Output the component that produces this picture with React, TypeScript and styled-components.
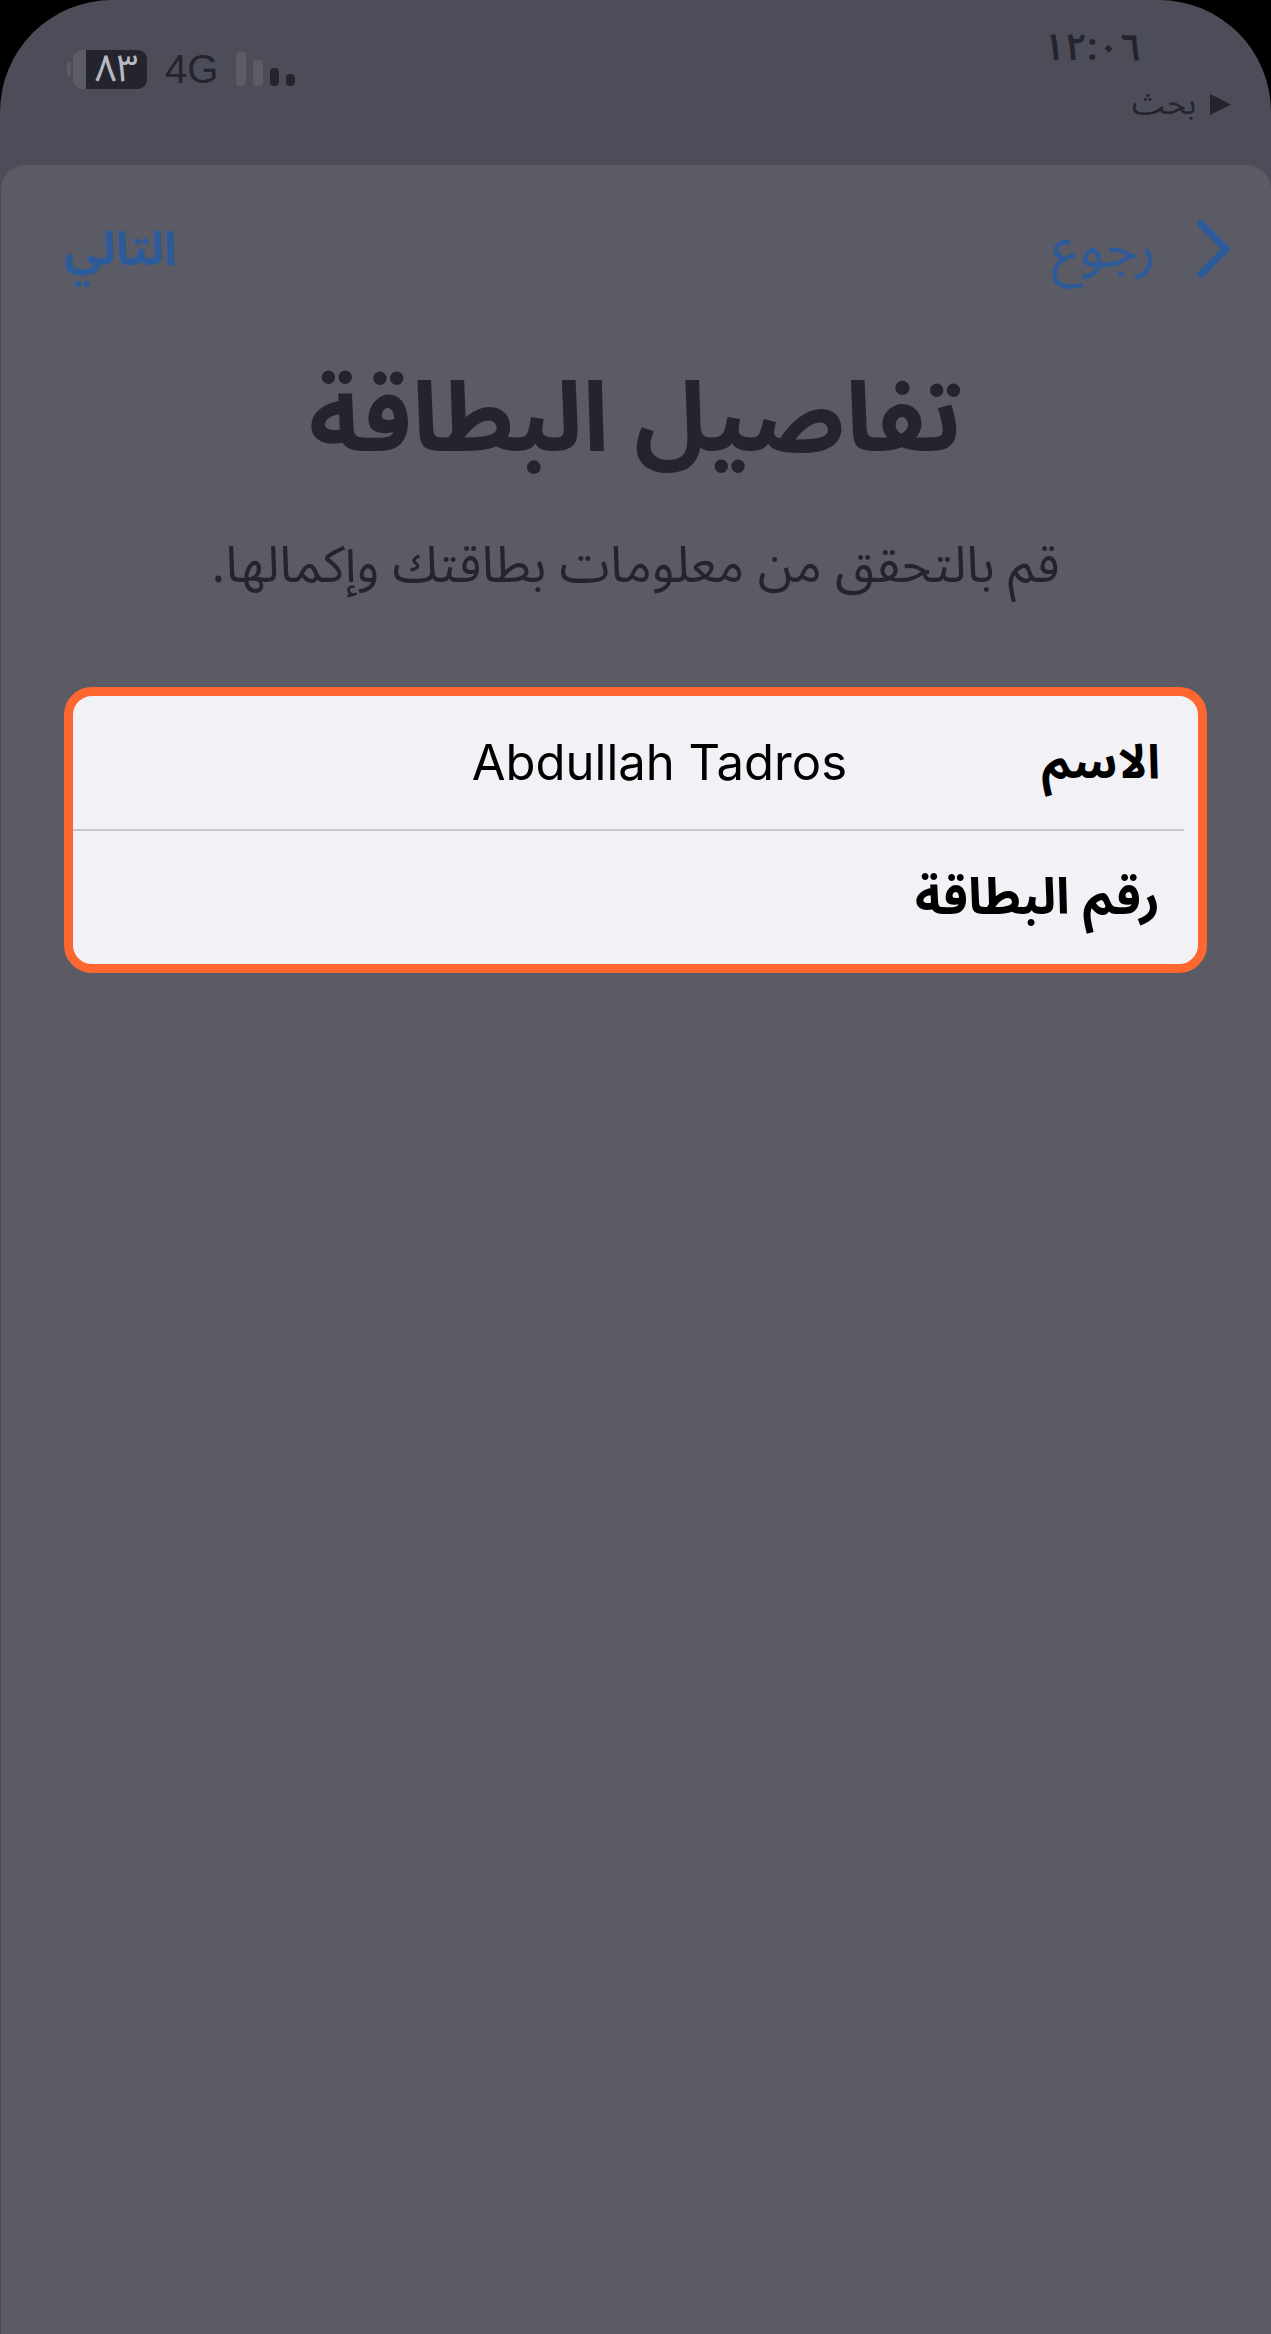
import React from "react";
import styled, { createGlobalStyle } from "styled-components";

const Global = createGlobalStyle`
  html, body { margin: 0; padding: 0; background: #000; }
  * { box-sizing: border-box; }
`;

const ARABIC = `"Noto Sans Arabic", "Noto Sans", "DejaVu Sans", sans-serif`;

const Screen = styled.div`
  width: 1271px;
  height: 2334px;
  display: flex;
  flex-direction: column;
  overflow: hidden;
  background: #4d4d59;
  border-radius: 112px 112px 0 0;
  font-family: ${ARABIC};
  color: #24242f;
`;

const StatusBar = styled.header`
  height: 165px;
  flex: none;
  display: flex;
  justify-content: space-between;
  align-items: flex-start;
  padding: 26px 40px 0 67px;
  direction: ltr;
`;

const Indicators = styled.div`
  display: flex;
  align-items: center;
  margin-top: 23px;
  gap: 18px;
`;

const Battery = styled.div`
  width: 80px;
  height: 39px;
  flex: none;
  display: flex;
  align-items: center;
`;

const BatteryNub = styled.span`
  width: 4px;
  height: 14px;
  margin-right: 2px;
  border-radius: 2px 0 0 2px;
  background: #5c5c66;
`;

const BatteryBody = styled.div`
  width: 74px;
  height: 39px;
  display: flex;
`;

const BatteryEmpty = styled.span`
  width: 13px;
  border-radius: 9px 0 0 9px;
  background: #5c5c66;
`;

const BatteryLevel = styled.span`
  flex: 1;
  border-radius: 0 9px 9px 0;
  background: #24242f;
  text-align: center;
  font-size: 38px;
  line-height: 38px;
  color: #b8b8c0;
`;

const Network = styled.span`
  font-family: "Liberation Sans", Arial, sans-serif;
  font-size: 40px;
  line-height: 40px;
  color: #24242f;
`;

const SignalBars = styled.div`
  display: flex;
  align-items: flex-end;
  gap: 7px;
  height: 34px;
`;

const SignalBar = styled.span<{ $h: number; $on?: boolean }>`
  width: ${(p) => (p.$on ? 9 : 10)}px;
  height: ${(p) => p.$h}px;
  border-radius: 4px;
  background: ${(p) => (p.$on ? "#24242f" : "#5c5c66")};
`;

const Clock = styled.div`
  display: flex;
  flex-direction: column;
  align-items: flex-end;
`;

const Time = styled.div`
  font-size: 38px;
  font-weight: 600;
  line-height: 44px;
  margin-right: 90px;
  direction: rtl;
`;

const BackLink = styled.div`
  display: flex;
  align-items: center;
  gap: 14px;
  margin-top: 16px;
  direction: rtl;
`;

const Triangle = styled.svg`
  width: 21px;
  height: 21px;
  flex: none;
`;

const BackLabel = styled.span`
  font-size: 32px;
  line-height: 36px;
`;

const Sheet = styled.main`
  flex: 1;
  margin-left: 1px;
  background: #5b5b66;
  border-radius: 24px 24px 0 0;
  padding: 0 40px 0 63px;
  display: flex;
  flex-direction: column;
  direction: rtl;
`;

const Nav = styled.nav`
  display: flex;
  justify-content: space-between;
  align-items: center;
  height: 170px;
`;

const NavBack = styled.div`
  display: flex;
  align-items: center;
  gap: 41px;
`;

const Chevron = styled.svg`
  width: 34px;
  height: 58px;
  flex: none;
  margin-top: -2px;
`;

const NavText = styled.span<{ $bold?: boolean }>`
  font-size: ${(p) => (p.$bold ? 47 : 55)}px;
  line-height: 60px;
  color: #2d5a99;
  font-weight: ${(p) => (p.$bold ? 700 : 400)};
`;

const Title = styled.h1`
  margin: 31px 24px 0 0;
  text-align: center;
  font-size: 97px;
  line-height: 110px;
  font-weight: 700;
`;

const Subtitle = styled.p`
  margin: 60px 24px 0 0;
  text-align: center;
  font-size: 51px;
  line-height: 60px;
`;

const Card = styled.section`
  margin: 91px 24px 0 0;
  height: 286px;
  border: 9px solid #ff6730;
  border-radius: 28px;
  background: #f1f1f6;
  display: flex;
  flex-direction: column;
`;

const Row = styled.div`
  flex: 1;
  display: grid;
  grid-template-columns: 313px 1fr;
  align-items: center;
  padding-right: 38px;
`;

const Divider = styled.hr`
  margin: 0 14px 0 0;
  border: 0;
  height: 2px;
  background: #c8c8cc;
  flex: none;
`;

const Label = styled.span<{ $size: number }>`
  font-size: ${(p) => p.$size}px;
  line-height: 60px;
  font-weight: 700;
  color: #000;
`;

const Value = styled.span`
  font-family: Inter, "Liberation Sans", sans-serif;
  font-size: 49px;
  line-height: 60px;
  color: #000;
  direction: ltr;
  justify-self: start;
`;

export default function App() {
  return (
    <Screen>
      <Global />
      <StatusBar>
        <Indicators>
          <Battery>
            <BatteryNub />
            <BatteryBody>
              <BatteryEmpty />
              <BatteryLevel>٨٣</BatteryLevel>
            </BatteryBody>
          </Battery>
          <Network>4G</Network>
          <SignalBars>
            <SignalBar $h={34} />
            <SignalBar $h={26} />
            <SignalBar $h={18} $on />
            <SignalBar $h={12} $on />
          </SignalBars>
        </Indicators>
        <Clock>
          <Time>١٢:٠٦</Time>
          <BackLink>
            <Triangle viewBox="0 0 21 21">
              <path d="M21 10.5 0 0v21z" fill="#24242f" />
            </Triangle>
            <BackLabel>بحث</BackLabel>
          </BackLink>
        </Clock>
      </StatusBar>
      <Sheet>
        <Nav>
          <NavBack>
            <Chevron viewBox="0 0 34 58">
              <path d="M4 4 29 29 4 54" fill="none" stroke="#2d5a99" strokeWidth="7.5" strokeLinecap="round" strokeLinejoin="round" />
            </Chevron>
            <NavText>رجوع</NavText>
          </NavBack>
          <NavText $bold>التالي</NavText>
        </Nav>
        <Title>تفاصيل البطاقة</Title>
        <Subtitle>قم بالتحقق من معلومات بطاقتك وإكمالها.</Subtitle>
        <Card>
          <Row>
            <Label $size={47}>الاسم</Label>
            <Value>Abdullah Tadros</Value>
          </Row>
          <Divider />
          <Row>
            <Label $size={50}>رقم البطاقة</Label>
          </Row>
        </Card>
      </Sheet>
    </Screen>
  );
}
